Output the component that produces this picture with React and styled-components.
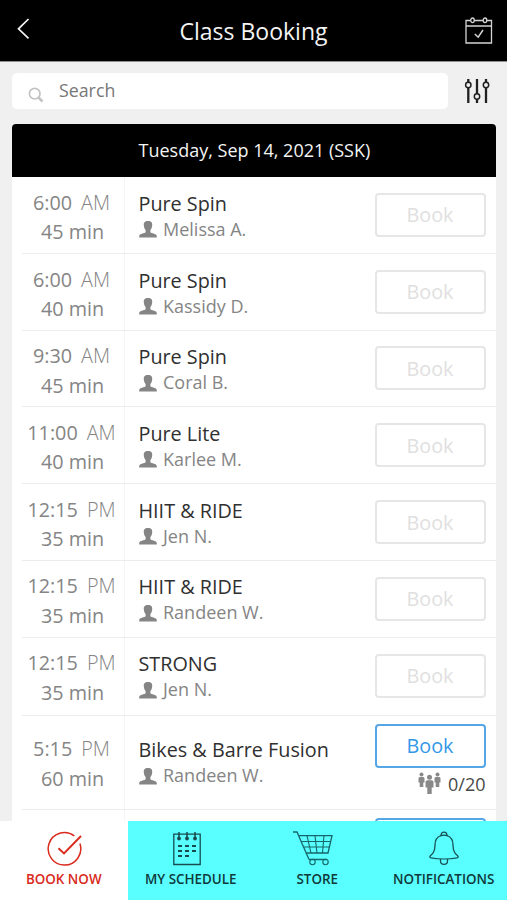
import React from 'react';
import styled, { createGlobalStyle } from 'styled-components';

const Global = createGlobalStyle`
  * { box-sizing: border-box; }
  body { margin: 0; background: #f0f0f0; font-family: "Open Sans", "Noto Sans", sans-serif; font-weight: 400; }
  button, input { font: inherit; }
  svg { display: block; flex: none; }
`;

const Screen = styled.div`
  width: 507px;
  height: 900px;
  overflow: hidden;
  display: flex;
  flex-direction: column;
  background: #f0f0f0;
`;

const TopBar = styled.header`
  height: 62px;
  flex: none;
  display: grid;
  grid-template-columns: 60px 1fr 60px;
  background: #000;
  color: #f4f4f4;
  border-bottom: 1px solid #8d8d8d;
`;

const Title = styled.h1`
  margin: 0;
  padding-top: 14px;
  text-align: center;
  font-size: 23px;
  line-height: 35px;
  font-weight: 400;
  white-space: nowrap;
`;

const BackButton = styled.div`
  padding: 18px 0 0 17px;
`;

const CalendarButton = styled.div`
  padding: 17px 0 0 18px;
`;

const SearchRow = styled.div`
  height: 61.5px;
  flex: none;
  display: flex;
  padding: 11px 17px 0 12px;
`;

const SearchField = styled.label`
  width: 435.5px;
  height: 36px;
  padding: 0 0 0 16px;
  display: flex;
  gap: 15px;
  border-radius: 5px;
  background: #fff;
  color: #777;
  font-size: 17.8px;
  line-height: 34px;
  svg { margin-top: 14px; }
`;

const FilterButton = styled.div`
  margin: 5px 0 0 16.5px;
`;

const Schedule = styled.main`
  width: 484px;
  margin-left: 12px;
  height: 697.5px;
  overflow: hidden;
  flex: none;
  background: #fff;
  border-radius: 4px 4px 0 0;
`;

const DateBar = styled.h2`
  margin: 0;
  height: 53.5px;
  padding-left: 126.5px;
  background: #000;
  color: #f4f4f4;
  font-size: 18px;
  line-height: 53px;
  font-weight: 400;
  white-space: nowrap;
`;

const ClassRow = styled.section`
  height: ${(p) => p.$height}px;
  margin-left: 10px;
  display: grid;
  grid-template-columns: 103px 1fr 121.5px;
  border-bottom: 1px solid #ececec;
`;

const TimeColumn = styled.div`
  padding-top: ${(p) => p.$top}px;
  padding-right: 3px;
  text-align: center;
  border-right: 1px solid #f5f5f5;
  color: #858585;
  font-size: 19.8px;
  line-height: 29.5px;
  white-space: nowrap;
`;

const Duration = styled.div`
  padding-left: 2px;
`;

const Meridiem = styled.span`
  margin-left: 9px;
  font-weight: 300;
  color: #858585;
`;

const ClassInfo = styled.div`
  padding: ${(p) => p.$top}px 0 0 13.5px;
  white-space: nowrap;
`;

const ClassName = styled.div`
  color: #303030;
  font-size: 19.8px;
  line-height: 26px;
`;

const Trainer = styled.div`
  display: flex;
  gap: 6.5px;
  color: #858585;
  font-size: 18px;
  line-height: 24px;
  svg { margin-top: 4.5px; }
`;

const Actions = styled.div`
  padding-top: ${(p) => p.$top}px;
`;

const BookButton = styled.button`
  display: block;
  width: 111px;
  height: 44px;
  padding: 0;
  border: 2px solid ${(p) => (p.$open ? '#55a6e6' : '#e6e6e6')};
  border-radius: 4px;
  background: #fff;
  color: ${(p) => (p.$open ? '#3498e8' : '#e0e0e0')};
  font-size: 19.8px;
  line-height: 39px;
`;

const Capacity = styled.div`
  width: 111px;
  display: flex;
  justify-content: flex-end;
  gap: 7px;
  margin-top: 4px;
  color: #484848;
  font-size: 18px;
  line-height: 24px;
`;

const TabBar = styled.nav`
  height: 79px;
  flex: none;
  display: grid;
  grid-template-columns: 127.5px 126.5px 126.5px 126.5px;
`;

const Tab = styled.div`
  display: flex;
  flex-direction: column;
  align-items: center;
  padding-top: 9px;
  background: ${(p) => (p.$active ? '#fff' : '#59ffff')};
  color: ${(p) => (p.$active ? '#d92a1c' : '#10393b')};
`;

const TabIcon = styled.div`
  margin-right: ${(p) => p.$nudge || 0}px;
`;

const TabLabel = styled.span`
  margin-top: 2px;
  font-size: 13.4px;
  line-height: 18px;
  font-weight: 600;
  white-space: nowrap;
`;

const PersonIcon = () => (
  <svg width="18" height="17" viewBox="0 0 18 17" fill="#858585">
    <path d="M9 0C5.500 0 4.600 1.700 4.800 4.200C4.900 6.500 5.800 8 6.600 9V11.200C5.500 12.400.4 12.600.2 15V16.500H17.800V15C17.600 12.600 12.500 12.400 11.400 11.200V9C12.200 8 13.100 6.500 13.200 4.200C13.400 1.700 12.500 0 9 0Z" />
  </svg>
);

const GroupIcon = () => (
  <svg width="23" height="23" viewBox="0 0 23 23" fill="#898989">
    <circle cx="3.500" cy="2.500" r="2" />
    <path d="M1.500 5H5.500L6.500 6V10.500H5.300V15H1.700V10.500H.5V6Z" />
    <circle cx="19.500" cy="2.500" r="2" />
    <path d="M17.500 5H21.500L22.500 6V10.500H21.300V15H17.700V10.500H16.500V6Z" />
    <circle cx="11.500" cy="5.300" r="2.500" />
    <path d="M8.800 8.300H14.200L15.500 9.800V15.500H13.700V22H9.300V15.500H7.500V9.800Z" />
  </svg>
);

const BackIcon = () => (
  <svg width="13" height="22" viewBox="0 0 13 22" fill="none" stroke="#f4f4f4" strokeWidth="1.700">
    <path d="M11.500 1L1.500 10.800L11.500 20.300" />
  </svg>
);

const CalendarIcon = () => (
  <svg width="28" height="28" viewBox="0 0 28 28" fill="none" stroke="#d4d4d4" strokeWidth="1.300">
    <path d="M5.500 3.500H1V26H26.500V3.500H22M9.500 3.500H18M1 9H26.500" />
    <ellipse cx="7.500" cy="3.300" rx="1.800" ry="2.300" />
    <ellipse cx="20" cy="3.300" rx="1.800" ry="2.300" />
    <path d="M9.800 17L13.200 20.200L18 13" strokeWidth="1.500" />
  </svg>
);

const SearchIcon = () => (
  <svg width="16" height="17" viewBox="0 0 16 17" fill="none" stroke="#c3c3c3">
    <circle cx="6.700" cy="6.700" r="5.300" strokeWidth="1.700" />
    <path d="M10.500 10.500L14.500 14.500" strokeWidth="2.500" />
  </svg>
);

const FilterIcon = () => (
  <svg width="26" height="26" viewBox="0 0 26 26" fill="none" stroke="#202020">
    <path d="M4.300 1V4.500M4.300 9.500V25M13 1V16M13 21V25M22 1V4.500M22 9.500V25" strokeWidth="2.300" />
    <circle cx="4.300" cy="7" r="2.700" strokeWidth="1.500" />
    <circle cx="13" cy="18.500" r="2.700" strokeWidth="1.500" />
    <circle cx="22" cy="7" r="2.700" strokeWidth="1.500" />
  </svg>
);

const BookNowIcon = () => (
  <svg width="36" height="38" viewBox="0 0 36 38" fill="none" stroke="#d92a1c">
    <path d="M27.300 5.800A16.300 16.300 0 1 0 32.900 13.500" strokeWidth="1.500" />
    <path d="M11.500 18.300L17 23.500L34 6" strokeWidth="1.900" />
  </svg>
);

const ScheduleIcon = () => (
  <svg width="28" height="38" viewBox="0 0 28 38" fill="none" stroke="#174b50">
    <path d="M.8 4.200H27.200V34.500H.8Z" strokeWidth="1.300" />
    <path d="M6 2V8M14 2V8M22 2V8" strokeWidth="1.500" />
    <g fill="#174b50" stroke="none"><circle cx="6" cy="8.500" r="1.900" /><circle cx="14" cy="8.500" r="1.900" /><circle cx="22" cy="8.500" r="1.900" /></g>
    <path d="M5 16H9M12 16H16M19 16H23M5 21H9M12 21H16M19 21H23M5 26H9M12 26H16" strokeWidth="1.800" />
  </svg>
);

const StoreIcon = () => (
  <svg width="42" height="38" viewBox="0 0 42 38" fill="none" stroke="#17666a" strokeWidth="1.100">
    <path d="M1 2H5L17 29.500M7 5.700H40L36 23H14.500M17 29.500H35" strokeWidth="1.300" />
    <path d="M9.500 11.500H38.500M12 17H37.500M15 5.700L19 23M23 5.700L25 23M32 5.700L30.500 23" />
    <circle cx="20.500" cy="32" r="2.700" /><circle cx="33.500" cy="32" r="2.700" />
  </svg>
);

const BellIcon = () => (
  <svg width="30" height="38" viewBox="0 0 30 38" fill="none" stroke="#174f53" strokeWidth="1.300">
    <path d="M12 5.500C7.500 7 6 10 6 15C6 22 3.500 24 1.200 26C.5 27 1 27.500 2 27.800C9 29.200 21 29.200 28 27.800C29 27.500 29.500 27 28.800 26C26.500 24 24 22 24 15C24 10 22.500 7 18 5.500" />
    <path d="M12 5.700C12 .8 18 .8 18 5.700C16 5 14 5 12 5.700ZM11.500 29V31C11.500 35.500 18.500 35.500 18.500 31V29" />
  </svg>
);

const classes = [
  { height: 77, time: '6:00', half: 'AM', duration: '45 min', name: 'Pure Spin', trainer: 'Melissa A.' },
  { height: 76.7, time: '6:00', half: 'AM', duration: '40 min', name: 'Pure Spin', trainer: 'Kassidy D.' },
  { height: 76.8, time: '9:30', half: 'AM', duration: '45 min', name: 'Pure Spin', trainer: 'Coral B.' },
  { height: 76.8, time: '11:00', half: 'AM', duration: '40 min', name: 'Pure Lite', trainer: 'Karlee M.' },
  { height: 76.7, time: '12:15', half: 'PM', duration: '35 min', name: 'HIIT & RIDE', trainer: 'Jen N.' },
  { height: 77, time: '12:15', half: 'PM', duration: '35 min', name: 'HIIT & RIDE', trainer: 'Randeen W.' },
  { height: 77.8, time: '12:15', half: 'PM', duration: '35 min', name: 'STRONG', trainer: 'Jen N.' },
  { height: 94, time: '5:15', half: 'PM', duration: '60 min', name: 'Bikes & Barre Fusion', trainer: 'Randeen W.', capacity: '0/20' },
];

const ClassItem = ({ item }) => {
  const open = Boolean(item.capacity);
  return (
    <ClassRow $height={item.height}>
      <TimeColumn $top={open ? 18.5 : 10.5}>
        <div>{item.time}<Meridiem>{item.half}</Meridiem></div>
        <Duration>{item.duration}</Duration>
      </TimeColumn>
      <ClassInfo $top={open ? 21.5 : 13.5}>
        <ClassName>{item.name}</ClassName>
        <Trainer><PersonIcon />{item.trainer}</Trainer>
      </ClassInfo>
      <Actions $top={open ? 7.8 : 15.8}>
        <BookButton $open={open}>Book</BookButton>
        {open && <Capacity><GroupIcon />{item.capacity}</Capacity>}
      </Actions>
    </ClassRow>
  );
};

const tabs = [
  { label: 'BOOK NOW', Icon: BookNowIcon, active: true, nudge: -2 },
  { label: 'MY SCHEDULE', Icon: ScheduleIcon, nudge: 8 },
  { label: 'STORE', Icon: StoreIcon, nudge: 9 },
  { label: 'NOTIFICATIONS', Icon: BellIcon },
];

export default function App() {
  return (
    <Screen>
      <Global />
      <TopBar>
        <BackButton><BackIcon /></BackButton>
        <Title>Class Booking</Title>
        <CalendarButton><CalendarIcon /></CalendarButton>
      </TopBar>
      <SearchRow>
        <SearchField><SearchIcon />Search</SearchField>
        <FilterButton><FilterIcon /></FilterButton>
      </SearchRow>
      <Schedule>
        <DateBar>Tuesday, Sep 14, 2021 (SSK)</DateBar>
        {classes.map((item, i) => <ClassItem key={i} item={item} />)}
        <ClassRow $height={94}>
          <TimeColumn $top={19} />
          <ClassInfo $top={21} />
          <Actions $top={8}><BookButton $open aria-label="Book" /></Actions>
        </ClassRow>
      </Schedule>
      <TabBar>
        {tabs.map(({ label, Icon, active, nudge }) => (
          <Tab key={label} $active={active}><TabIcon $nudge={nudge}><Icon /></TabIcon><TabLabel>{label}</TabLabel></Tab>
        ))}
      </TabBar>
    </Screen>
  );
}
